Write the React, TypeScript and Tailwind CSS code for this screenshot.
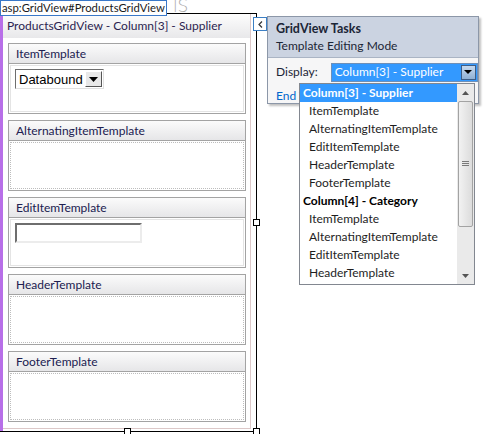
const ui = "font-['Lato','Open_Sans',sans-serif]";

function TemplateBox({ title, dotted, children }: { title: string; dotted?: boolean; children?: React.ReactNode }) {
  return (
    <div className="border border-[#a3a3a3] bg-white">
      <div className="h-[20px] pl-[7px] flex items-center border-b border-[#a3a3a3] bg-gradient-to-b from-[#fbfbfb] to-[#e6e6e8] text-[12px] text-[#202050]">
        {title}
      </div>
      <div className="p-px">
        <div className={`h-[47px] ${dotted ? 'border border-dotted border-[#bdbdbd]' : 'border border-[#e4e4e4]'} px-[4px] pt-[3px]`}>
          {children}
        </div>
      </div>
    </div>
  );
}

const listItems: { label: string; head?: boolean }[] = [
  { label: 'ItemTemplate' },
  { label: 'AlternatingItemTemplate' },
  { label: 'EditItemTemplate' },
  { label: 'HeaderTemplate' },
  { label: 'FooterTemplate' },
  { label: 'Column[4] - Category', head: true },
  { label: 'ItemTemplate' },
  { label: 'AlternatingItemTemplate' },
  { label: 'EditItemTemplate' },
  { label: 'HeaderTemplate' },
];

export default function App() {
  return (
    <div className={`relative w-[483px] h-[434px] bg-white overflow-hidden ${ui}`}>
      {/* ─── designer surface ─── */}
      <div className="absolute left-0 top-[13px] w-[257px] h-[419px] border-t border-r border-b border-black">
        <div className="flex h-full">
          <div className="w-[3px] bg-[#b86fe8]" />
          <div className="w-[248px] h-[415px] border-r border-b border-[#dcc8c8] flex flex-col">
            <div className="h-[24px] pl-[4px] flex items-center bg-gradient-to-b from-[#fdfdfd] to-[#e8e8ea] text-[12px] text-[#2c2450]">
              ProductsGridView - Column[3] - Supplier
            </div>
            <div className="flex flex-col gap-[6px] pl-[5px] pr-[4px] pt-[5px]">
              <TemplateBox title="ItemTemplate">
                <div className="w-[89px] h-[20px] flex items-center border border-t-[#6e6e6e] border-l-[#6e6e6e] border-r-[#e0e0e0] border-b-[#e0e0e0] bg-white">
                  <span className="flex-1 pl-[3px] text-[13px] text-black font-['Liberation_Sans',sans-serif] leading-none">Databound</span>
                  <span className="w-[17px] h-[16px] mr-px flex items-center justify-center bg-[#e8e8e8] border border-t-white border-l-white border-r-[#555] border-b-[#555]">
                    <svg width="9" height="5" viewBox="0 0 9 5"><path d="M0 0h9L4.5 5z" fill="#000" /></svg>
                  </span>
                </div>
              </TemplateBox>
              <TemplateBox title="AlternatingItemTemplate" dotted />
              <TemplateBox title="EditItemTemplate">
                <div className="w-[127px] h-[20px] border-2 border-t-[#6e6e6e] border-l-[#6e6e6e] border-b-[#ececec] border-r-[#ececec] bg-white" />
              </TemplateBox>
              <TemplateBox title="HeaderTemplate" dotted />
              <TemplateBox title="FooterTemplate" dotted />
            </div>
          </div>
        </div>
        {/* selection handles */}
        <span className="absolute right-[-4px] top-[205px] w-[7px] h-[7px] bg-white border border-black" />
        <span className="absolute left-[124px] bottom-[-4px] w-[7px] h-[7px] bg-white border border-black" />
        <span className="absolute right-[-4px] bottom-[-4px] w-[7px] h-[7px] bg-white border border-black" />
      </div>

      {/* ─── control tag ─── */}
      <div className="absolute left-0 top-0 flex items-start">
        <div className="h-[16px] px-[1px] flex items-center border border-[#3a78c8] bg-white text-[11.3px] text-[#1a1a1a] leading-none">
          asp:GridView#ProductsGridView
        </div>
        <span className="ml-[6px] text-[17px] leading-[13px] text-[#aaaaaa] font-['DejaVu_Sans',sans-serif] font-light">lS</span>
      </div>

      {/* ─── smart tag ─── */}
      <div className="absolute left-[253px] top-[17px] w-[14px] h-[14px] border border-[#3c7fc4] bg-white flex items-center justify-center">
        <svg width="5" height="7" viewBox="0 0 5 7"><path d="M4 0.5L1 3.5L4 6.5" stroke="#333" fill="none" strokeWidth="1.2" /></svg>
      </div>
      <div className="absolute left-[267px] top-[16px] w-[212px] h-[88px] border border-[#8c97a8] bg-[#f6f6f7] shadow-[2px_2px_2px_rgba(0,0,0,0.25)]">
        <div className="h-[41px] bg-[#cbd3e1] border-b border-[#aab4c4] pl-[8px] pt-[3px] text-[#1b2536]">
          <div className="text-[12.5px] font-bold leading-[17px]">GridView Tasks</div>
          <div className="text-[12px] leading-[18px]">Template Editing Mode</div>
        </div>
        <div className="pl-[8px] pt-[5px] text-[12px] text-[#1b2536]">
          <div className="flex items-center gap-[13px] h-[18px]">
            <span>Display:</span>
            <div className="w-[147px] h-[19px] flex items-center border border-[#6d8fb8] bg-[#3399ff] p-px">
              <span className="flex-1 pl-[2px] text-white leading-none">Column[3] - Supplier</span>
              <span className="w-[15px] h-[15px] flex items-center justify-center bg-gradient-to-b from-[#c6d9ee] to-[#8fb0d4] border border-[#3d5d86]">
                <svg width="8" height="4" viewBox="0 0 8 4"><path d="M0 0h8L4 4z" fill="#000" /></svg>
              </span>
            </div>
          </div>
          <div className="mt-[6px] text-[#0066cc]">End Template Editing</div>
        </div>
      </div>

      {/* ─── dropdown list ─── */}
      <div className="absolute left-[299px] top-[83px] w-[176px] h-[202px] border border-[#828790] bg-white flex text-[12px] text-[#1e1e1e]">
        <div className="flex-1 flex flex-col">
          <div className="h-[18px] pl-[3px] flex items-center bg-[#3399ff] text-white font-bold">Column[3] - Supplier</div>
          {listItems.map((it, i) => (
            <div key={i} className={`h-[18px] flex items-center ${it.head ? 'pl-[3px] font-bold text-black' : 'pl-[9px]'}`}>
              {it.label}
            </div>
          ))}
        </div>
        <div className="w-[17px] bg-[#eaeaea] flex flex-col items-center">
          <div className="h-[17px] w-full flex items-center justify-center">
            <svg width="7" height="4" viewBox="0 0 7 4"><path d="M0 4h7L3.5 0z" fill="#555" /></svg>
          </div>
          <div className="w-[15px] h-[126px] rounded-[2px] border border-[#a3a3a3] bg-gradient-to-r from-[#f2f2f2] to-[#dcdcdc] flex items-center justify-center">
            <svg width="7" height="6" viewBox="0 0 7 6"><path d="M0 0.5h7M0 2.5h7M0 4.5h7" stroke="#7a7a7a" /></svg>
          </div>
          <div className="flex-1" />
          <div className="h-[17px] w-full flex items-center justify-center">
            <svg width="7" height="4" viewBox="0 0 7 4"><path d="M0 0h7L3.5 4z" fill="#555" /></svg>
          </div>
        </div>
      </div>
    </div>
  );
}
